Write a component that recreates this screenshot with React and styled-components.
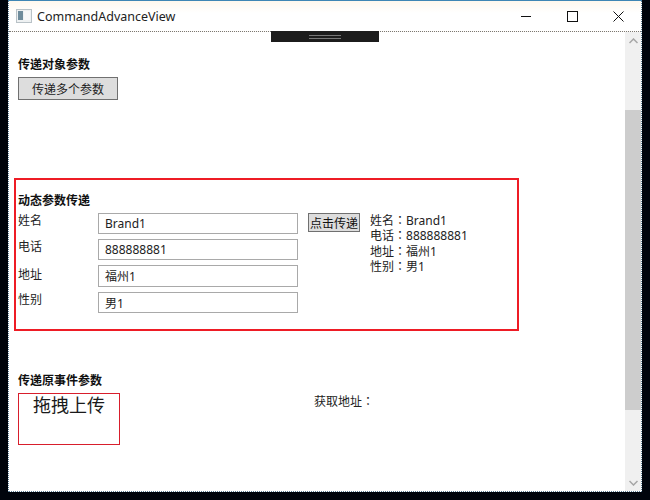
import React from 'react';
import styled, { createGlobalStyle } from 'styled-components';

const fields = [
  { label: '姓名', value: 'Brand1', height: 21, nudge: 0 },
  { label: '电话', value: '888888881', height: 21, nudge: 0 },
  { label: '地址', value: '福州1', height: 22, nudge: 2 },
  { label: '性别', value: '男1', height: 21, nudge: 0 },
];

export default function App() {
  return (
    <>
      <GlobalStyle />
      <Window>
        <TitleBar>
          <AppIcon width="16" height="16" viewBox="0 0 16 16">
            <rect x="0.5" y="1.5" width="15" height="13" fill="#eef1f2" stroke="#b9c2c7" />
            <rect x="2" y="3" width="5" height="9" fill="#6f8c9c" />
            <rect x="8" y="3" width="6" height="9" fill="#f7f8f9" />
          </AppIcon>
          <Title>CommandAdvanceView</Title>
          <Controls>
            <ControlButton>
              <svg width="11" height="11" viewBox="0 0 11 11">
                <path d="M0 5.5H10" stroke="#111" fill="none" />
              </svg>
            </ControlButton>
            <ControlButton>
              <svg width="11" height="11" viewBox="0 0 11 11">
                <rect x="0.5" y="0.5" width="10" height="10" stroke="#111" fill="none" />
              </svg>
            </ControlButton>
            <ControlButton>
              <svg width="11" height="11" viewBox="0 0 11 11">
                <path d="M0.5 0.5L10.5 10.5M10.5 0.5L0.5 10.5" stroke="#111" fill="none" />
              </svg>
            </ControlButton>
          </Controls>
        </TitleBar>
        <DebugBar>
          <DebugLines />
        </DebugBar>
        <Body>
          <Content>
            <Heading>传递对象参数</Heading>
            <GrayButton>传递多个参数</GrayButton>

            <DynamicPanel>
              <Heading>动态参数传递</Heading>
              <PanelRow>
                <Form>
                  {fields.map(f => (
                    <React.Fragment key={f.label}>
                      <FieldLabel $nudge={f.nudge}>{f.label}</FieldLabel>
                      <Input $height={f.height} defaultValue={f.value} />
                    </React.Fragment>
                  ))}
                </Form>
                <SmallButton>点击传递</SmallButton>
                <Result>
                  {fields.map(f => (
                    <div key={f.label}>{f.label}<Colon>：</Colon>{f.value}</div>
                  ))}
                </Result>
              </PanelRow>
            </DynamicPanel>

            <EventSection>
              <Heading>传递原事件参数</Heading>
              <EventRow>
                <DropBox>拖拽上传</DropBox>
                <AddressLabel>获取地址<Colon>：</Colon></AddressLabel>
              </EventRow>
            </EventSection>
          </Content>
          <ScrollBar>
            <ScrollArrow>
              <svg width="9" height="6" viewBox="0 0 9 6">
                <path d="M0.5 5L4.5 1L8.5 5" stroke="#a6a6a6" strokeWidth="1.5" fill="none" />
              </svg>
            </ScrollArrow>
            <ScrollGap $size={61} />
            <ScrollThumb />
            <ScrollGap $size={64} />
            <ScrollArrow>
              <svg width="9" height="6" viewBox="0 0 9 6">
                <path d="M0.5 1L4.5 5L8.5 1" stroke="#a6a6a6" strokeWidth="1.5" fill="none" />
              </svg>
            </ScrollArrow>
          </ScrollBar>
        </Body>
      </Window>
    </>
  );
}

const GlobalStyle = createGlobalStyle`
  html, body {
    margin: 0;
    padding: 0;
    width: 650px;
    height: 500px;
    overflow: hidden;
    background: #00040c;
  }
  body {
    font-family: "Noto Sans", "Noto Sans CJK SC", sans-serif;
    font-size: 12px;
    color: #1a1a1a;
  }
`;

const Window = styled.div`
  position: relative;
  box-sizing: border-box;
  width: 634px;
  height: 492px;
  margin-left: 8px;
  display: flex;
  flex-direction: column;
  background: #fff;
  border-top: 1px solid #3f86b5;
  border-bottom: 1px dotted #5d7f96;
  border-left: 1px dotted #5d7f96;
  border-right: 1px dotted #5d7f96;
`;

const TitleBar = styled.header`
  box-sizing: border-box;
  height: 31px;
  flex-shrink: 0;
  display: flex;
  align-items: center;
  padding-left: 7px;
  background: linear-gradient(#fff8ee, #fff 12px);
  border-bottom: 1px dotted #777;
`;

const AppIcon = styled.svg`
  flex-shrink: 0;
`;

const Title = styled.div`
  margin-left: 5px;
  font-size: 12.5px;
  color: #222;
`;

const Controls = styled.div`
  margin-left: auto;
  display: flex;
`;

const ControlButton = styled.div`
  width: 46px;
  height: 30px;
  display: flex;
  align-items: center;
  justify-content: center;
`;

const DebugBar = styled.div`
  position: absolute;
  top: 30px;
  left: 262px;
  width: 108px;
  height: 11px;
  background: #1c1c1c;
  display: flex;
  align-items: center;
  justify-content: center;
`;

const DebugLines = styled.div`
  width: 32px;
  height: 2px;
  border-top: 1px solid #777;
  border-bottom: 1px solid #777;
`;

const Body = styled.main`
  flex: 1;
  min-height: 0;
  display: flex;
`;

const Content = styled.div`
  flex: 1;
  padding: 25px 0 0 9px;
`;

const Heading = styled.div`
  font-family: "Noto Sans CJK SC", sans-serif;
  font-size: 12px;
  font-weight: 700;
  line-height: 14px;
  color: #111;
`;

const GrayButton = styled.button`
  display: block;
  box-sizing: border-box;
  width: 100px;
  height: 23px;
  margin-top: 6px;
  padding: 0;
  font-family: "Noto Sans CJK SC", sans-serif;
  font-size: 12px;
  color: #222;
  background: #dddddd;
  border: 1px solid #707070;
`;

const DynamicPanel = styled.section`
  box-sizing: border-box;
  width: 505px;
  height: 153px;
  margin: 78px 0 0 -4px;
  padding: 13px 0 0 2px;
  border: 2px solid #ee1c25;
`;

const PanelRow = styled.div`
  display: flex;
  align-items: flex-start;
  margin-top: 6px;
`;

const Form = styled.div`
  display: grid;
  grid-template-columns: 80px 200px;
  row-gap: 5px;
`;

const FieldLabel = styled.div`
  padding-top: ${props => props.$nudge}px;
  font-family: "Noto Sans CJK SC", sans-serif;
  font-size: 12px;
  line-height: 14px;
  color: #222;
`;

const Input = styled.input`
  box-sizing: border-box;
  width: 200px;
  height: ${props => props.$height}px;
  padding: 0 6px;
  font-family: "Noto Sans", "Noto Sans CJK SC", sans-serif;
  font-size: 12px;
  color: #222;
  border: 1px solid #a9a9a9;
  border-radius: 0;
  outline: none;
`;

const SmallButton = styled.button`
  box-sizing: border-box;
  width: 52px;
  height: 19px;
  margin-left: 10px;
  padding: 0;
  font-family: "Noto Sans CJK SC", sans-serif;
  font-size: 12px;
  line-height: 17px;
  color: #111;
  background: #dddddd;
  border: 1px solid #707070;
`;

const Result = styled.div`
  margin-left: 10px;
  line-height: 15.4px;
  color: #222;
`;

const Colon = styled.span`
  font-family: "Noto Sans CJK TC", sans-serif;
  line-height: 0;
`;

const EventSection = styled.section`
  margin-top: 42px;
`;

const EventRow = styled.div`
  display: flex;
  align-items: flex-start;
  margin-top: 6px;
`;

const DropBox = styled.div`
  box-sizing: border-box;
  width: 102px;
  height: 52px;
  border: 1px solid #d81e2c;
  font-family: "Noto Sans CJK SC", sans-serif;
  font-size: 18px;
  line-height: 21px;
  text-align: center;
  color: #1a1a1a;
`;

const AddressLabel = styled.div`
  margin: 2px 0 0 194px;
  line-height: 14px;
  color: #222;
`;

const ScrollBar = styled.aside`
  width: 16px;
  flex-shrink: 0;
  display: flex;
  flex-direction: column;
  background: #f0f0f0;
`;

const ScrollArrow = styled.div`
  height: 17px;
  flex-shrink: 0;
  display: flex;
  align-items: center;
  justify-content: center;
`;

const ScrollGap = styled.div`
  height: ${props => props.$size}px;
  flex-shrink: 0;
`;

const ScrollThumb = styled.div`
  flex: 1;
  background: #cdcdcd;
`;
